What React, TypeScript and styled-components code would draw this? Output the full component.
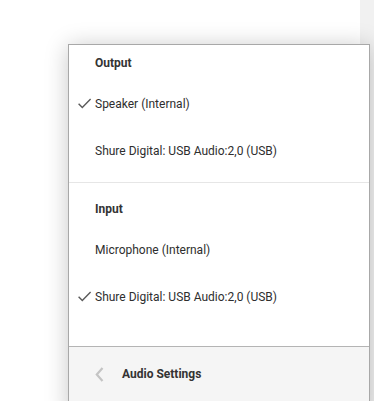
import React from "react";
import styled, { createGlobalStyle } from "styled-components";

const Global = createGlobalStyle`
  html, body { margin: 0; padding: 0; background: #fff; }
  body { font-family: Roboto, "Liberation Sans", Arial, sans-serif; }
  #root { width: 374px; height: 401px; overflow: hidden; }
`;

const Page = styled.div`
  position: relative;
  width: 374px;
  height: 401px;
  display: flex;
  overflow: hidden;
`;

const MainArea = styled.div`
  flex: 1;
  background: #ffffff;
`;

const SideStrip = styled.div`
  width: 14px;
  background: #f1f1f1;
`;

const Menu = styled.div`
  position: absolute;
  left: 68px;
  top: 44px;
  width: 300px;
  height: 370px;
  background: #ffffff;
  border: 1px solid #a8a8a8;
  box-shadow: 0 2px 22px rgba(0, 0, 0, 0.22);
  display: flex;
  flex-direction: column;
  color: #2e2e2e;
  font-size: 12px;
`;

const Section = styled.div<{ $top: number; $bottom: number }>`
  display: flex;
  flex-direction: column;
  padding-top: ${(p) => p.$top}px;
  padding-bottom: ${(p) => p.$bottom}px;
`;

const Divider = styled.div`
  height: 1px;
  background: #e6e6e6;
`;

const Header = styled.div`
  height: 35px;
  display: flex;
  align-items: center;
  padding-left: 26px;
  font-weight: 700;
  color: #333;
`;

const Item = styled.div`
  height: 47px;
  display: grid;
  grid-template-columns: 26px 1fr;
  align-items: center;
`;

const CheckCell = styled.div`
  display: flex;
  align-items: center;
  padding-left: 9px;
  height: 100%;
`;

const Footer = styled.div`
  flex: 1;
  background: #f5f5f5;
  border-top: 1px solid #b4b4b4;
`;

const FooterRow = styled.div`
  height: 54px;
  display: flex;
  align-items: center;
  padding-left: 26px;
  gap: 18px;
  font-weight: 700;
  color: #333;
`;

const Check = () => (
  <svg width="14" height="12" viewBox="0 0 14 12">
    <path d="M0.6 5.8 L4.3 9.6 L12.6 1" fill="none" stroke="#5a5a5a" strokeWidth="1.4" />
  </svg>
);

const Chevron = () => (
  <svg width="9" height="15" viewBox="0 0 9 15">
    <path d="M7.5 1 L1.8 7.5 L7.5 14" fill="none" stroke="#c4c4c4" strokeWidth="2.2" />
  </svg>
);

type Device = { name: string; selected: boolean };

const output: Device[] = [
  { name: "Speaker (Internal)", selected: true },
  { name: "Shure Digital: USB Audio:2,0 (USB)", selected: false },
];
const input: Device[] = [
  { name: "Microphone (Internal)", selected: false },
  { name: "Shure Digital: USB Audio:2,0 (USB)", selected: true },
];

const DeviceList = ({ items }: { items: Device[] }) => (
  <>
    {items.map((d, i) => (
      <Item key={i}>
        <CheckCell>{d.selected ? <Check /> : null}</CheckCell>
        <span>{d.name}</span>
      </Item>
    ))}
  </>
);

export default function App() {
  return (
    <>
      <Global />
      <Page>
        <MainArea />
        <SideStrip />
        <Menu>
          <Section $top={0} $bottom={8}>
            <Header>Output</Header>
            <DeviceList items={output} />
          </Section>
          <Divider />
          <Section $top={8} $bottom={26}>
            <Header>Input</Header>
            <DeviceList items={input} />
          </Section>
          <Footer>
            <FooterRow>
              <Chevron />
              <span>Audio Settings</span>
            </FooterRow>
          </Footer>
        </Menu>
      </Page>
    </>
  );
}
